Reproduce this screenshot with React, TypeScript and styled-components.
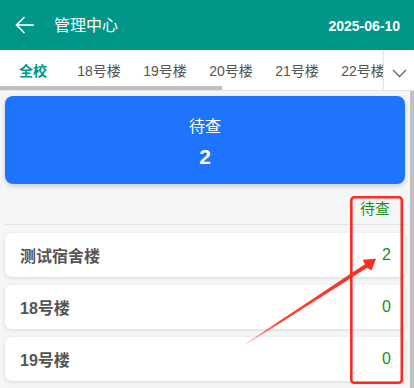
import React from "react";
import styled, { createGlobalStyle } from "styled-components";

const GlobalStyle = createGlobalStyle`
  html, body { margin: 0; padding: 0; }
  body {
    font-family: "Liberation Sans", "Noto Sans CJK SC", sans-serif;
    background: #f5f6f8;
  }
  * { box-sizing: border-box; }
`;

const Page = styled.div`
  position: relative;
  width: 414px;
  height: 388px;
  display: flex;
  flex-direction: column;
  overflow: hidden;
  background: #f5f6f8;
`;

const Header = styled.header`
  height: 50px;
  flex: none;
  background: #009688;
  color: #fff;
  display: flex;
  align-items: center;
  padding: 0 14px 0 15px;
`;

const BackButton = styled.button`
  border: 0;
  background: none;
  padding: 0;
  width: 20px;
  height: 20px;
  display: flex;
  align-items: center;
  justify-content: center;
  color: #fff;
  margin-right: 19px;
`;

const Title = styled.h1`
  margin: 0;
  font-size: 16px;
  font-weight: 400;
  line-height: 20px;
  flex: 1;
  padding-top: 2px;
`;

const DateText = styled.span`
  font-size: 14px;
  font-weight: 700;
  padding-top: 1px;
`;

const TabBar = styled.div`
  height: 41px;
  flex: none;
  display: flex;
  background: #fff;
  border-bottom: 1px solid #e6e6e6;
`;

const TabColumn = styled.div`
  flex: 1;
  min-width: 0;
  display: flex;
  flex-direction: column;
`;

const TabStrip = styled.div`
  display: flex;
  overflow: hidden;
`;

const HScrollTrack = styled.div`
  height: 4px;
  background: #fff;
`;

const HScrollThumb = styled.div`
  height: 4px;
  background: #bfbfbf;
`;

const Tab = styled.div<{ $active?: boolean }>`
  flex: none;
  width: 66px;
  height: 36px;
  display: flex;
  align-items: center;
  justify-content: center;
  padding-top: 3px;
  font-size: 14px;
  white-space: nowrap;
  color: ${(p) => (p.$active ? "#009688" : "#555")};
  font-weight: ${(p) => (p.$active ? 700 : 400)};
`;

const MoreButton = styled.button`
  flex: none;
  width: 31px;
  height: 40px;
  border: 0;
  border-left: 1px solid #e6e6e6;
  background: #fff;
  display: flex;
  align-items: center;
  justify-content: center;
  padding: 6px 0 0;
  box-shadow: -2px 0 4px rgba(0, 0, 0, 0.04);
`;

const Body = styled.div`
  flex: 1;
  min-height: 0;
  display: flex;
`;

const Content = styled.main`
  flex: 1;
  min-width: 0;
  overflow: hidden;
  padding: 5px 5px 0 5px;
`;

const VScrollTrack = styled.div`
  flex: none;
  width: 4px;
  background: #c1c1c1;
`;

const SummaryCard = styled.section`
  height: 88px;
  border-radius: 8px;
  background: #1f74fe;
  color: #fff;
  display: flex;
  flex-direction: column;
  align-items: center;
  justify-content: center;
  padding-top: 6px;
  box-shadow: 0 2px 5px rgba(0, 0, 0, 0.18);
`;

const SummaryLabel = styled.div`
  font-size: 16px;
  line-height: 20px;
`;

const SummaryValue = styled.div`
  font-size: 21px;
  font-weight: 700;
  line-height: 24px;
  margin-top: 8px;
`;

const ColumnHeader = styled.div`
  height: 41px;
  display: flex;
  align-items: flex-end;
  justify-content: flex-end;
  padding: 0 15px 5px 0;
  border-bottom: 1px solid #e2e2e2;
  font-size: 15px;
  line-height: 20px;
  color: #1b8f1b;
`;

const List = styled.div`
  display: flex;
  flex-direction: column;
  gap: 8px;
  margin-top: 8px;
  padding-bottom: 8px;
`;

const Row = styled.div`
  height: 44px;
  background: #fff;
  border-radius: 6px;
  box-shadow: 0 1px 4px rgba(0, 0, 0, 0.12);
  display: flex;
  align-items: center;
  justify-content: space-between;
  padding: 0 14px 0 15px;
`;

const RowName = styled.span`
  font-size: 16px;
  font-weight: 700;
  color: #555;
`;

const RowValue = styled.span`
  font-size: 16px;
  color: #1b8f1b;
`;

const Annotation = styled.svg`
  position: absolute;
  top: 0;
  left: 0;
  width: 414px;
  height: 388px;
  pointer-events: none;
`;

const tabs = ["全校", "18号楼", "19号楼", "20号楼", "21号楼", "22号楼", "23号楼", "24号楼", "25号楼", "26号楼"];

const rows = [
  { name: "测试宿舍楼", value: 2 },
  { name: "18号楼", value: 0 },
  { name: "19号楼", value: 0 },
  { name: "20号楼", value: 0 },
];

const visibleTabWidth = 383;
const thumbWidth = Math.round((visibleTabWidth * visibleTabWidth) / (tabs.length * 66));

export default function App() {
  return (
    <>
      <GlobalStyle />
      <Page>
        <Header>
          <BackButton aria-label="返回">
            <svg width="20" height="18" viewBox="0 0 20 18" fill="none" stroke="#fff" strokeWidth="1.6">
              <path d="M19 9H1.5" />
              <path d="M9.5 1L1.5 9l8 8" />
            </svg>
          </BackButton>
          <Title>管理中心</Title>
          <DateText>2025-06-10</DateText>
        </Header>
        <TabBar>
          <TabColumn>
            <TabStrip>
              {tabs.map((t, i) => (
                <Tab key={t} $active={i === 0}>
                  {t}
                </Tab>
              ))}
            </TabStrip>
            <HScrollTrack>
              <HScrollThumb style={{ width: thumbWidth }} />
            </HScrollTrack>
          </TabColumn>
          <MoreButton aria-label="更多">
            <svg width="15" height="9" viewBox="0 0 15 9" fill="none" stroke="#666" strokeWidth="1.3">
              <path d="M1 1l6.5 6.5L14 1" />
            </svg>
          </MoreButton>
        </TabBar>
        <Body>
          <Content>
            <SummaryCard>
              <SummaryLabel>待查</SummaryLabel>
              <SummaryValue>2</SummaryValue>
            </SummaryCard>
            <ColumnHeader>待查</ColumnHeader>
            <List>
              {rows.map((r) => (
                <Row key={r.name}>
                  <RowName>{r.name}</RowName>
                  <RowValue>{r.value}</RowValue>
                </Row>
              ))}
            </List>
          </Content>
          <VScrollTrack />
        </Body>
        <Annotation viewBox="0 0 414 388">
          <defs>
            <linearGradient id="arrowFade" x1="246" y1="344" x2="376" y2="259" gradientUnits="userSpaceOnUse">
              <stop offset="0" stopColor="#ff2a1e" stopOpacity="0.15" />
              <stop offset="0.25" stopColor="#ff2a1e" stopOpacity="0.9" />
              <stop offset="1" stopColor="#ff2a1e" />
            </linearGradient>
          </defs>
          <rect x="351.3" y="197.3" width="50.5" height="185.4" rx="3" fill="none" stroke="#ff2a1e" strokeWidth="2.6" />
          <polygon
            fill="url(#arrowFade)"
            points="245.6,343.6 246.4,344.4 367.1,267.8 371.6,270.6 376,258.8 362.8,259.8 364.9,264.2"
          />
        </Annotation>
      </Page>
    </>
  );
}
